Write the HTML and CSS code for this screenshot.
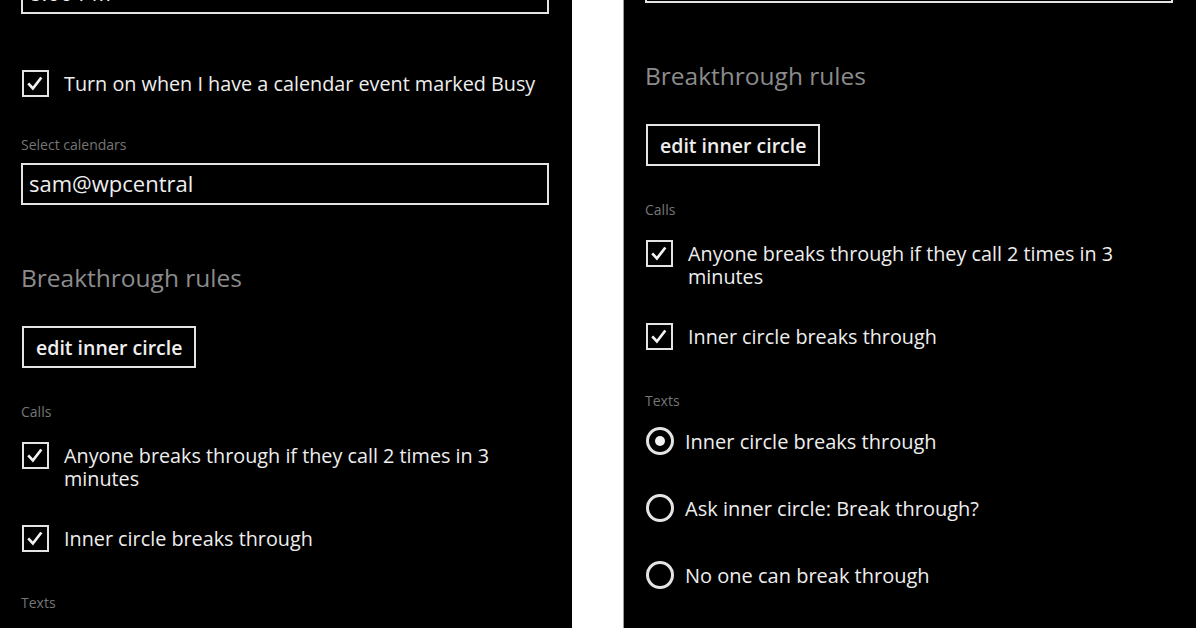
FILE: index.html
```html
<!DOCTYPE html>
<html>
<head>
    <meta charset="utf-8">
    <meta name="viewport" content="width=device-width, initial-scale=1">
    <title>Quiet hours - Settings</title>
    <link rel="stylesheet" href="styles.css">
</head>
<body>
    <div class="screens">
        <!-- first screen: top of the list -->
        <div class="phone">
            <div class="page">
                <div class="textbox">8:00 PM</div>

                <label class="check busy">
                    <span class="box"><svg viewBox="0 0 26 26"><path d="M5 13.5l5.5 6l10-13"/></svg></span>
                    <span class="check-text">Turn on when I have a calendar event marked Busy</span>
                </label>

                <div class="caption select">Select calendars</div>
                <div class="textbox calendars">sam@wpcentral</div>

                <h2>Breakthrough rules</h2>
                <button class="btn">edit inner circle</button>

                <div class="caption calls">Calls</div>
                <label class="check first">
                    <span class="box"><svg viewBox="0 0 26 26"><path d="M5 13.5l5.5 6l10-13"/></svg></span>
                    <span class="check-text">Anyone breaks through if they call 2 times in 3 minutes</span>
                </label>
                <label class="check second">
                    <span class="box"><svg viewBox="0 0 26 26"><path d="M5 13.5l5.5 6l10-13"/></svg></span>
                    <span class="check-text">Inner circle breaks through</span>
                </label>

                <div class="caption texts">Texts</div>
                <label class="radio first selected"><span class="ring"></span><span>Inner circle breaks through</span></label>
                <label class="radio"><span class="ring"></span><span>Ask inner circle: Break through?</span></label>
                <label class="radio"><span class="ring"></span><span>No one can break through</span></label>
            </div>
        </div>

        <!-- second screen: same page scrolled down -->
        <div class="phone">
            <div class="page scrolled">
                <div class="textbox">8:00 PM</div>

                <label class="check busy">
                    <span class="box"><svg viewBox="0 0 26 26"><path d="M5 13.5l5.5 6l10-13"/></svg></span>
                    <span class="check-text">Turn on when I have a calendar event marked Busy</span>
                </label>

                <div class="caption select">Select calendars</div>
                <div class="textbox calendars">sam@wpcentral</div>

                <h2>Breakthrough rules</h2>
                <button class="btn">edit inner circle</button>

                <div class="caption calls">Calls</div>
                <label class="check first">
                    <span class="box"><svg viewBox="0 0 26 26"><path d="M5 13.5l5.5 6l10-13"/></svg></span>
                    <span class="check-text">Anyone breaks through if they call 2 times in 3 minutes</span>
                </label>
                <label class="check second">
                    <span class="box"><svg viewBox="0 0 26 26"><path d="M5 13.5l5.5 6l10-13"/></svg></span>
                    <span class="check-text">Inner circle breaks through</span>
                </label>

                <div class="caption texts">Texts</div>
                <label class="radio first selected"><span class="ring"></span><span>Inner circle breaks through</span></label>
                <label class="radio"><span class="ring"></span><span>Ask inner circle: Break through?</span></label>
                <label class="radio"><span class="ring"></span><span>No one can break through</span></label>
            </div>
        </div>
    </div>
</body>
</html>
```

FILE: styles.css
```css
body {
    margin: 0;
    background: #fff;
    font-family: "Open Sans", "Noto Sans", sans-serif;
}
.screens {
    display: flex;
    gap: 52px;
    height: 628px;
    overflow: hidden;
}
.phone {
    width: 572px;
    height: 628px;
    flex-shrink: 0;
    background: #000;
    color: #eeeeee;
    overflow: hidden;
}
.phone + .phone {
    box-shadow: -1px 0 0 #9a9a9a;
}
.page {
    padding: 0 23px 0 21px;
    margin-top: -28px;
}
.page.scrolled {
    margin-top: -230px;
}
.textbox {
    height: 42px;
    box-sizing: border-box;
    border: 2px solid #e4e4e4;
    padding: 0 6px;
    font-size: 22px;
    line-height: 36px;
}
.textbox.calendars {
    margin-top: 9px;
}
.check {
    display: flex;
    align-items: flex-start;
    gap: 15px;
    font-size: 19.8px;
    line-height: 23px;
}
.check.busy {
    margin-top: 56px;
}
.check.first {
    margin-top: 21px;
}
.check.second {
    margin-top: 35px;
}
.box {
    width: 27px;
    height: 27px;
    box-sizing: border-box;
    border: 2.5px solid #e4e4e4;
    flex-shrink: 0;
    margin-left: 1px;
}
.box svg {
    display: block;
    width: 22px;
    height: 22px;
    fill: none;
    stroke: #f2f2f2;
    stroke-width: 3.2;
}
.check-text {
    margin-top: 2px;
}
.caption {
    font-size: 14px;
    line-height: 18px;
    color: #767676;
}
.caption.select {
    margin-top: 39px;
}
.caption.calls {
    margin-top: 35px;
}
.caption.texts {
    margin-top: 42px;
}
h2 {
    margin: 56px 0 0;
    font-size: 24.5px;
    font-weight: 400;
    line-height: 34px;
    color: #8c8c8c;
}
.btn {
    display: block;
    margin: 31px 0 0 1px;
    height: 42px;
    padding: 0 12px;
    border: 2px solid #e4e4e4;
    background: none;
    color: #eeeeee;
    font-family: inherit;
    font-size: 19.5px;
    font-weight: 600;
}
.radio {
    display: flex;
    align-items: center;
    gap: 11px;
    height: 28px;
    margin-top: 39px;
    font-size: 20px;
}
.radio.first {
    margin-top: 17px;
}
.ring {
    width: 28px;
    height: 28px;
    box-sizing: border-box;
    border: 3px solid #e4e4e4;
    border-radius: 50%;
    margin-left: 1px;
    display: flex;
    align-items: center;
    justify-content: center;
}
.radio.selected .ring::after {
    content: "";
    width: 10px;
    height: 10px;
    border-radius: 50%;
    background: #f2f2f2;
}
```
